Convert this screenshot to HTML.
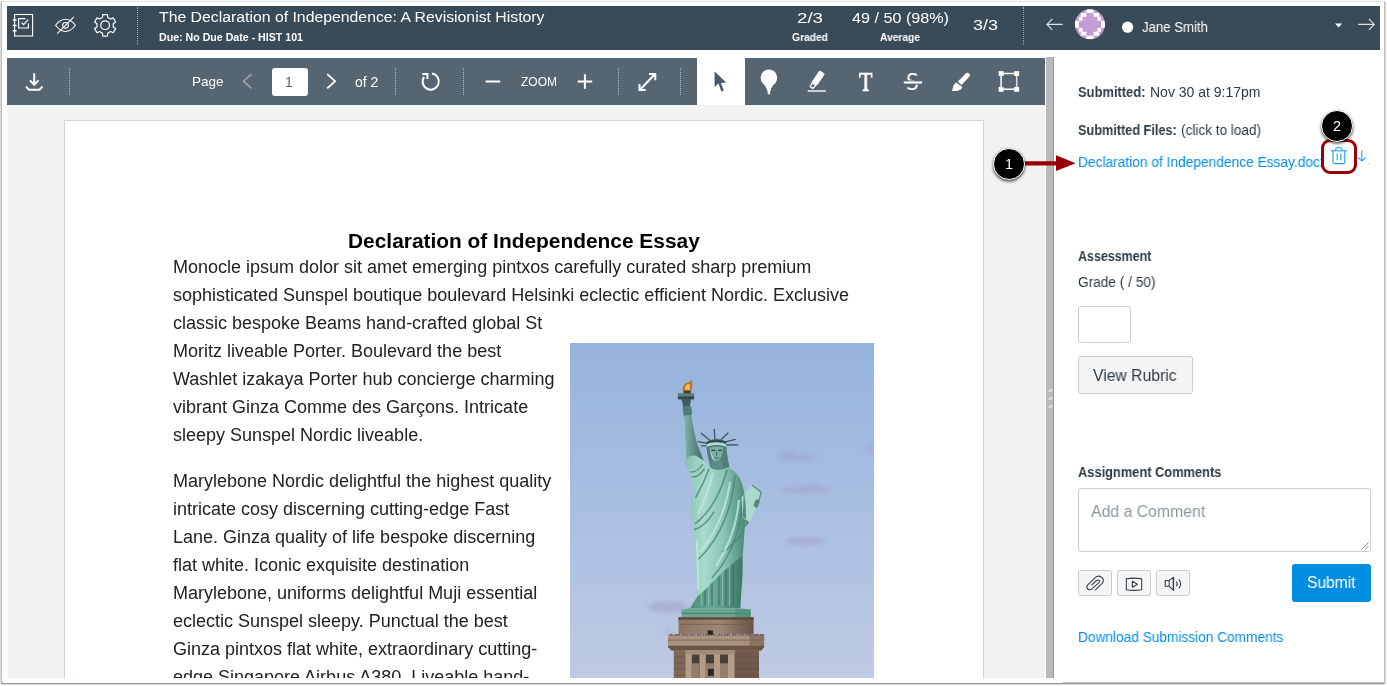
<!DOCTYPE html>
<html lang="en"><head><meta charset="utf-8"><title>SpeedGrader</title>
<style>
html,body{margin:0;padding:0;background:#fff;}
body{width:1387px;height:686px;overflow:hidden;position:relative;font-family:"Liberation Sans",sans-serif;}
.abs,.t,svg.i{position:absolute;}
svg.abs{z-index:5;}
.t{will-change:transform;white-space:nowrap;transform-origin:0 0;line-height:normal;z-index:2;}
.z3{z-index:5;}
#frame{left:.900px;top:.500px;width:1384.100px;height:682.600px;border:1px solid #bdbdbd;border-top-color:#e4e4e4;box-shadow:0 1px 1.5px rgba(0,0,0,.55);box-sizing:border-box;background:#fff;}
#hdr{left:7px;top:6px;width:1373px;height:44px;background:#394b58;}
#tb{left:7px;top:57.5px;width:1038px;height:47.5px;background:#556572;}
#docbg{left:7px;top:105px;width:1038px;height:573px;background:#f2f2f2;overflow:hidden;}
#page{left:56.5px;top:15px;width:920px;height:700px;background:#fff;border:1px solid #cdd3da;box-sizing:border-box;}
#split{left:1046px;top:56.5px;width:8px;height:621.5px;background:#b9b9b9;border-right:1px solid #9a9a9a;box-sizing:border-box;}
.vd{width:0;border-left:1px dotted rgba(255,255,255,.55);}
#sel{left:697px;top:57.5px;width:48px;height:47.5px;background:#fff;}
#pgin{left:272px;top:67.5px;width:36px;height:28px;background:#fff;border-radius:3px;}
.btn{background:#f5f5f5;border:1px solid #c7cdd1;border-radius:3px;box-sizing:border-box;}
.inp{background:#fff;border:1px solid #c7cdd1;border-radius:3px;box-sizing:border-box;}
#submit{left:1292px;top:564px;width:78.7px;height:37.6px;background:#008ee2;border-radius:3px;z-index:4;}
.circ{width:32px;height:32px;border-radius:50%;background:#000;border:1.600px solid #fff;box-sizing:border-box;box-shadow:0 1.500px 3px rgba(0,0,0,.7);z-index:6;color:#fff;font-size:14.500px;text-align:center;line-height:30px;}
#redbox{left:1321px;top:138.500px;width:36px;height:35.200px;border:3.600px solid #980008;border-radius:9px;box-sizing:border-box;background:#fff;z-index:4;}
#docclip{left:7px;top:105px;width:1038px;height:573px;overflow:hidden;z-index:2;will-change:transform;}
</style></head><body>
<div id="frame" class="abs"></div>
<div id="hdr" class="abs"></div>
<div id="tb" class="abs"></div>
<div id="docbg" class="abs"><div id="page" class="abs"></div></div>
<div id="sel" class="abs"></div>
<div id="pgin" class="abs"></div>
<div id="split" class="abs"></div>
<!-- dividers -->
<div class="abs vd" style="left:137px;top:7px;height:38px"></div>
<div class="abs vd" style="left:1023px;top:7px;height:38px"></div>
<div class="abs vd" style="left:69px;top:68px;height:27px"></div>
<div class="abs vd" style="left:395px;top:68px;height:27px"></div>
<div class="abs vd" style="left:463px;top:68px;height:27px"></div>
<div class="abs vd" style="left:618px;top:68px;height:27px"></div>
<div class="abs vd" style="left:680px;top:68px;height:27px"></div>
<!-- right panel controls -->
<div class="abs inp" style="left:1078.3px;top:305.7px;width:52.5px;height:37.7px"></div>
<div class="abs btn" style="left:1078.3px;top:356px;width:114.4px;height:37.8px"></div>
<div class="abs inp" style="left:1078.3px;top:487.8px;width:292.5px;height:64px"></div>
<div class="abs btn" style="left:1078.3px;top:570.3px;width:33.4px;height:25.4px"></div>
<div class="abs btn" style="left:1117px;top:570.3px;width:33.7px;height:25.4px"></div>
<div class="abs btn" style="left:1156.2px;top:570.3px;width:33.4px;height:25.4px"></div>
<div id="submit" class="abs"></div>
<div id="redbox" class="abs"></div>
<div class="abs circ" style="left:993px;top:147.800px">1</div>
<div class="abs circ" style="left:1321.100px;top:109.900px">2</div>
<div class="abs" style="left:3px;top:678px;width:1060px;height:4.5px;background:#fff;z-index:7"></div>
<div class="t" id="gT" style="left:858.600px;top:69.200px;font-family:'DejaVu Serif',serif;font-size:24px;color:#fff;-webkit-text-stroke:.5px #fff;transform:scaleX(.84);z-index:4">T</div>
<div class="t" id="gS" style="left:905.800px;top:67.500px;font-family:'DejaVu Sans',sans-serif;font-size:23.500px;color:#fff;transform:scaleX(.86);z-index:4">S</div>
<svg class="abs" style="left:0;top:0;z-index:5" width="1387" height="686" viewBox="0 0 1387 686" fill="none" stroke-linecap="butt">
<g stroke="#fff" stroke-width="1.1"><rect x="14.6" y="14.5" width="18" height="21.5"/><path d="M12.8,20H16.6M12.8,25.5H16.6M12.8,30.8H16.6" stroke-width="1.4"/><path d="M25.5,18.6H18.6V28H28.4V23.5" stroke-width="1.2"/><path d="M21.6,22.6L23.6,24.6L28.2,19.6" stroke-width="1.3"/></g>
<g stroke="#fff" stroke-width="1.05"><path d="M55.6,25.3C59,20.6 62.5,19.2 65.5,19.2C68.5,19.2 72,20.6 75.4,25.3C72,30 68.5,31.4 65.5,31.4C62.500,31.4 59,30 55.6,25.3Z"/><circle cx="65.5" cy="25.3" r="2.9"/><path d="M57.2,33.7L73.9,16.9"/></g>
<g stroke="#fff" stroke-width="1.2" stroke-linejoin="round"><path d="M102.45,17.43 L102.70,14.56 L107.50,14.56 L107.75,17.43 L110.59,19.07 L113.20,17.85 L115.60,22.01 L113.24,23.66 L113.24,26.94 L115.60,28.59 L113.20,32.75 L110.59,31.53 L107.75,33.17 L107.50,36.04 L102.70,36.04 L102.45,33.17 L99.61,31.53 L97.00,32.75 L94.60,28.59 L96.96,26.94 L96.96,23.66 L94.60,22.01 L97.00,17.85 L99.61,19.07 Z"/><circle cx="105.1" cy="25.3" r="4.4"/></g>
<g stroke="#dfe3e6" stroke-width="1.1"><path d="M1062.7,24.4H1046.9M1052.3,19L1046.9,24.4L1052.3,29.8"/><path d="M1358.2,24.4H1374.3M1368.9,19L1374.3,24.4L1368.9,29.8"/></g>
<path d="M1335,23.4H1342.2L1338.6,27.6Z" fill="#fff"/>
<circle cx="1127.6" cy="27.2" r="5.6" fill="#fff"/>
<clipPath id="av"><circle cx="1089.95" cy="24.3" r="15"/></clipPath><g clip-path="url(#av)"><rect x="1075" y="9" width="30" height="30.4" fill="#c49bd2"/>
<rect x="1086.29" y="9.10" width="7.26" height="3.84" fill="#fff"/>
<rect x="1093.55" y="12.94" width="5.55" height="3.88" fill="#fff"/>
<rect x="1097.40" y="16.82" width="3.60" height="3.88" fill="#fff"/>
<rect x="1080.80" y="12.94" width="5.55" height="3.88" fill="#fff"/>
<rect x="1078.90" y="16.82" width="3.60" height="3.88" fill="#fff"/>
<rect x="1086.29" y="35.66" width="7.26" height="3.84" fill="#fff"/>
<rect x="1093.55" y="31.78" width="5.55" height="3.88" fill="#fff"/>
<rect x="1097.40" y="27.90" width="3.60" height="3.88" fill="#fff"/>
<rect x="1080.80" y="31.78" width="5.55" height="3.88" fill="#fff"/>
<rect x="1078.90" y="27.90" width="3.60" height="3.88" fill="#fff"/>
<rect x="1101.00" y="20.70" width="4.15" height="7.20" fill="#fff"/>
<rect x="1074.75" y="20.70" width="4.15" height="7.20" fill="#fff"/>
</g>
<g stroke="#fff" stroke-width="2"><path d="M34.2,73.2V85.2M29.9,80.4L34.2,84.9L38.5,80.4"/><path d="M25.9,86.5L29,89.7H39.5L42.5,86.5"/></g>
<path d="M251.4,74.1L243.6,81.2L251.4,88.4" stroke="#fff" stroke-opacity=".4" stroke-width="1.8"/>
<path d="M327.2,74.1L335.1,81.2L327.2,88.4" stroke="#fff" stroke-width="1.8"/>
<path d="M432.11,73.52A8.1,8.1 0 1 1 424.06,76.85" stroke="#fff" stroke-width="2"/>
<path d="M422.2,73.9H427.4V79.1" stroke="#fff" stroke-width="2"/>
<path d="M485.6,81.5H500.2M577.7,81.5H592.2M584.9,74.2V88.8" stroke="#fff" stroke-width="2"/>
<path d="M639.8,90L655,74M649,73.9H655.3V80.3M639.5,83.9V90.1H645.7" stroke="#fff" stroke-width="2"/>
<path d="M714.6,71.4V86.9L718.5,83.6L721.3,91.6L723.8,90.6L720.9,82.9L726.2,82.6Z" fill="#46586a"/>
<g fill="#fff"><circle cx="768.9" cy="77.7" r="8.3"/><path d="M761.8,82 Q767.6,87.5 767.9,94.2 H769.9 Q770.2,87.5 776,82Z"/></g>
<g transform="rotate(35 818.150 78.150)"><rect x="814.900" y="70.800" width="6.500" height="14.300" rx="1.300" fill="#fff"/><path d="M815.900,85.400H820.400L819.700,89.700H816.600Z" stroke="#fff" stroke-width="1.300" fill="none" stroke-linejoin="round"/></g>
<path d="M807.700,91H825.800" stroke="#fff" stroke-opacity=".72" stroke-width="1.900"/>
<path d="M905.500,82.500H920" stroke="#556572" stroke-width="4.200"/><path d="M903.800,82.500H922.100" stroke="#fff" stroke-width="2.200"/>
<path d="M961.600,81.400L967.500,75.200" stroke="#fff" stroke-width="4.800" stroke-linecap="round"/><path d="M959.700,79.600L963.300,83.100L961.500,84.900L957.900,81.500Z" fill="#fff"/>
<path d="M952,90.900C953.300,88.500 952.300,84.600 956.300,82.400L962.300,86.900C961.800,90.200 956.500,91.500 952,90.900Z" fill="#fff"/>
<path d="M1001.100,73.600V89.300M1001.100,73.600H1016.700M1001.100,89.300H1016.700" stroke="#fff" stroke-width="1.500"/><path d="M1016.700,73.600V89.300" stroke="#fff" stroke-opacity=".8" stroke-width="1.500"/>
<rect x="998.65" y="71.15" width="4.900" height="4.900" fill="#fff"/>
<rect x="1014.25" y="71.15" width="4.900" height="4.900" fill="#fff"/>
<rect x="998.65" y="86.85" width="4.900" height="4.900" fill="#fff"/>
<rect x="1014.25" y="86.85" width="4.900" height="4.900" fill="#fff"/>
<g stroke="#1a98e6" stroke-width="1.05"><path d="M1330.9,150.8H1346.9"/><path d="M1335.7,150.8V149.4Q1335.7,147.7 1337.400,147.7H1340.400Q1342.100,147.7 1342.100,149.4V150.8"/><path d="M1333,150.8V162Q1333,163.6 1334.600,163.6H1343.200Q1344.800,163.6 1344.800,162V150.8"/><path d="M1337.200,153.600V160.600M1340.800,153.600V160.600"/></g>
<path d="M1361.800,150.400V160.900M1358,157.300L1361.800,161.100L1365.600,157.300" stroke="#1a98e6" stroke-width="1.05"/>
<rect x="1368.3" y="163" width="1" height="1" fill="#1a98e6" opacity=".6"/>
<path d="M1024,163.400H1058" stroke="#980008" stroke-width="4.200"/><path d="M1056,155.200L1075.700,163.200L1056,171Z" fill="#980008"/>
<path d="M1094.960,590.450L1102.300,583.200C1104,581.300 1103.600,578.600 1101.600,577.300C1099.600,575.800 1097,576 1095.150,577.600L1087.800,584.900C1086.400,586.300 1086.500,588 1087.700,589C1088.900,590 1090.900,589.900 1092.500,588.300L1099.200,582.300C1100,581.500 1099.800,580.600 1099,580.200C1098,579.700 1096.800,580.200 1095.900,581L1091.400,585.300" stroke="#2d3b45" stroke-width="1.050"/>
<g stroke="#2d3b45" stroke-width="1.050" stroke-linejoin="round"><path d="M1126.300,578.700Q1134,577.500 1141.700,578.700V589.800Q1134,591 1126.300,589.800Z"/><path d="M1132.300,581.200L1137.500,584.300L1132.300,587.300Z"/></g>
<g stroke="#2d3b45" stroke-width="1.050" stroke-linejoin="round"><path d="M1169.200,580.400H1165.200V586.300H1169.200L1173.600,590.400V577.200ZM1169.200,580.400V586.300"/><path d="M1172.800,578.200V589.600" stroke-opacity=".5"/><path d="M1176.300,581.500Q1178.300,583.800 1176.300,586.100M1178.800,579.300Q1182.400,583.800 1178.800,588.400"/></g>
<path d="M1361.500,549.500L1368.500,542.500M1365,549.500L1368.500,546" stroke="#6b7780" stroke-width=".9"/>
<g fill="#eef3f8"><path d="M1048,391.500L1051.500,388.500V391.500Z"/><path d="M1048,399.500L1051.500,396.500V399.500Z"/><path d="M1048,407.500L1051.500,404.500V407.500Z"/></g>
</svg>
<div id="docclip" class="abs">
<svg class="abs" style="left:563px;top:238.200px" width="304" height="335" viewBox="570 343.200 304 335">
<defs><linearGradient id="sky" x1="0" y1="0" x2="0" y2="1"><stop offset="0" stop-color="#95b3dd"/><stop offset=".5" stop-color="#a9bfe1"/><stop offset="1" stop-color="#bfcae3"/></linearGradient><linearGradient id="robe" x1="0" y1="0" x2="1" y2="0"><stop offset="0" stop-color="#86c0b0"/><stop offset=".3" stop-color="#a9dbcd"/><stop offset=".62" stop-color="#8cc6b6"/><stop offset=".85" stop-color="#62a08f"/><stop offset="1" stop-color="#4c8474"/></linearGradient><linearGradient id="under" x1="0" y1="0" x2="1" y2="0"><stop offset="0" stop-color="#4f8c7b"/><stop offset=".45" stop-color="#6aa896"/><stop offset="1" stop-color="#3f7767"/></linearGradient><linearGradient id="arm" x1="0" y1="0" x2="1" y2="0"><stop offset="0" stop-color="#7fb2a7"/><stop offset=".5" stop-color="#5c8d85"/><stop offset="1" stop-color="#41706a"/></linearGradient><linearGradient id="ped" x1="0" y1="0" x2="1" y2="0"><stop offset="0" stop-color="#8a7462"/><stop offset=".55" stop-color="#a08875"/><stop offset=".8" stop-color="#7f6958"/><stop offset="1" stop-color="#6a5648"/></linearGradient><filter id="bl" x="-20%" y="-60%" width="140%" height="220%"><feGaussianBlur stdDeviation="2"/></filter><filter id="b1"><feGaussianBlur stdDeviation=".55"/></filter></defs>
<rect x="570" y="343.200" width="304" height="335" fill="url(#sky)"/>
<g fill="#a09dc6" filter="url(#bl)" opacity=".5"><ellipse cx="797" cy="458" rx="20" ry="3.500"/><ellipse cx="789" cy="456" rx="9" ry="4"/><ellipse cx="806" cy="490" rx="27" ry="3.500"/><ellipse cx="812" cy="487.500" rx="12" ry="3"/><ellipse cx="806" cy="541.500" rx="20" ry="4"/><ellipse cx="668" cy="607.500" rx="20" ry="6"/><ellipse cx="870" cy="449" rx="5" ry="4"/><ellipse cx="668" cy="631" rx="4" ry="2"/></g>
<g filter="url(#b1)">
<path d="M683.200,392C681.600,388 683.500,384.500 686.500,383.200C688.500,382.400 690.500,381.800 691.800,379.800C692.500,383 693,388 691,392Z" fill="#b97a1c"/><path d="M684.800,389.500C684.800,386.500 686.500,384.800 689,384C690,386 690.300,388.500 689.500,390.500Z" fill="#edc067"/><rect x="683.500" y="391" width="7.200" height="2.600" fill="#4a3b22"/>
<path d="M677.800,393.600H694.100V399.800H691L689.800,407.500H683.400L681.600,399.800H677.800Z" fill="#3f5b5a"/><path d="M677.800,395.300H694.100" stroke="#8aa9a3" stroke-width=".9"/><path d="M678.500,398.300H693.500" stroke="#2c4443" stroke-width="1.400"/>
<path d="M682.600,407C684,405.600 689.500,405.600 691.300,407.200L692,413C691.500,416 690,417.500 688.500,418H685C683.500,416 682.800,412 682.600,407Z" fill="#4e7e78"/>
<path d="M684.600,416C686,415 690,415 691.600,416.400C693,426 695.500,438 697.500,445L701.500,455L703.500,461L690,469L686.400,458C685.400,444 685,430 684.600,416Z" fill="url(#arm)"/>
<g stroke="#3a5a58" stroke-width="1.300" fill="none" stroke-linecap="round"><path d="M715,440.500L714.200,429.700M711,441.500L701.300,433.500M720,441L728,433.200M708.500,443.800L698,441.800M723,442.500L735.400,439.600M724.500,445.200L737.800,445.100M708,446L701.500,446"/></g>
<path d="M706.300,446C706.500,441.500 712,439 716.300,439C721,439 726.300,441.500 726.400,446L726.800,452C727.500,457 728.300,462 729.500,467L727,471H711L709.500,464C708,458 706.800,452 706.300,446Z" fill="#4f7f78"/>
<path d="M706.500,444.600C710,441.600 722.500,441.600 726.300,444.600L726.200,447.200C721,444.600 712,444.600 706.700,447.200Z" fill="#b5dcd2"/><path d="M706.400,442.300C710,439.300 722.500,439.300 726.300,442.300L726.300,444.400C721,441.600 712,441.600 706.500,444.400Z" fill="#2f4d4b"/>
<path d="M709.800,448C710.500,455 712.500,460.500 716.500,462.500C720.500,460.500 722.800,455 723.300,448C719,446.300 714,446.300 709.800,448Z" fill="#7aaea2"/><path d="M711.300,450.600H715.300M718,450.600H722" stroke="#2b4947" stroke-width="1.100"/><path d="M716.600,451.500V456M714.300,458.300H718.800" stroke="#3f6660" stroke-width=".9"/><path d="M709.800,448C712,454 713,459 716.500,462.500C713,462 710.500,457 709.800,448Z" fill="#a8d6ca"/>
<path d="M712.500,461H722L724,469H710.500Z" fill="#5a8d84"/>
<path d="M696.600,560C696.800,572 697.200,586 697.100,597L690.100,608.400H740.400L741.500,590C742.400,580 742.800,572 742.600,556Z" fill="url(#under)"/>
<g stroke="#3a7060" stroke-width="1.300" fill="none" opacity=".8"><path d="M705,575V606M712,570V606M719,568V606M726,563V606M733,560V606"/></g><g stroke="#8cc4b3" stroke-width="1.200" fill="none" opacity=".7"><path d="M701.500,580V606M708.500,574V606M722.500,566V606M729.500,562V606"/></g>
<path d="M685.300,461C687,457 692,454.500 697,456.500L703.500,461L709,467C714,471 722,471 728.500,467L732.100,470.300C736,473 739,476 740.300,479.600C742,483 743.200,487 743.800,491.300L745,500C746.500,510 746.200,520 744.500,530C744,540 743.500,548 742.600,556C735,562 725,570 717,578C710,585 703,592 697.100,597C696.900,585 696.500,572 696,562C695,552 694,540 693.600,530C693,522 691.500,514 690.100,507.600C690.500,500 693.500,494 694.800,489C692,483 689.500,476 687.800,468C686,466 685,463.500 685.300,461Z" fill="url(#robe)"/>
<g stroke="#4a8272" fill="none" stroke-width="1.500" opacity=".8"><path d="M709,469C705,480 699,492 695.500,498"/><path d="M727,470C722,490 711,512 695,524"/><path d="M735,476C733,500 724,535 698,560"/><path d="M742,505C740,530 732,556 712,578"/><path d="M694,530C700,528 708,522 714,512"/><path d="M744,530C738,540 730,548 722,552"/></g>
<g stroke="#c4eade" fill="none" stroke-width="2.200" opacity=".75"><path d="M713,473C709,490 703,505 698,514"/><path d="M730,482C727,505 716,535 700,552"/><path d="M739,500C737,522 730,545 716,566"/><path d="M697,540C697.500,555 698,575 698.300,590"/></g>
<path d="M687.800,468C692,470 698,467 701.500,462L707,468C702,478 697,486 694.800,489C692,483 689.500,476 687.800,468Z" fill="#9bd0c0"/><path d="M689.500,472C694,473 699,470 703,464.500M691,477C695,478 699.500,475.500 704.500,469" stroke="#4f8575" stroke-width="1.100" fill="none"/>
<path d="M741.500,497.500L752,485.500L761.300,492.400L758.800,500.500L756.600,507.600L749,523L742.800,518Z" fill="#acdacc"/><path d="M752,485.500L761.300,492.400L757,507" stroke="#5b9283" stroke-width="1.400" fill="none"/><path d="M743.800,491.300L745,500C746.500,510 746.400,520 745,528L749.300,522.500L742.800,517Z" fill="#558c7c"/><path d="M755.500,500C758,499 760,500.500 759.500,503L756.500,508.500L753.500,506Z" fill="#4f8577"/>
<path d="M690.100,608.400H740.400L750.800,609.800V617.700H681.500V609.800Z" fill="#69a692"/><path d="M681.500,613.600H750.800" stroke="#43806d" stroke-width="1"/><path d="M735,609.500H750.800V617.700H735Z" fill="#4f8c79" opacity=".7"/>
<rect x="678.500" y="617.500" width="75.100" height="17" fill="url(#ped)"/><rect x="678.500" y="617.500" width="75.100" height="2.400" fill="#5d4a3e"/><path d="M680,624.500H752" stroke="#6f5b4d" stroke-width=".8"/>
<rect x="668" y="634.300" width="96.100" height="13" fill="#a9927d"/><rect x="749.600" y="634.300" width="14.500" height="13" fill="#8a7361"/><path d="M668,640.300H764.100" stroke="#806a5a" stroke-width="1"/><path d="M668,646.600H764.100" stroke="#6a5648" stroke-width="1.200"/>
<path d="M670,635H762.500" stroke="#5e5875" stroke-width="1.800" stroke-dasharray="1.600 1.100"/><path d="M671,634.600H762" stroke="#c04a55" stroke-width="1.200" stroke-dasharray="1 4.700"/><path d="M673.500,634.800H762" stroke="#e4e0e6" stroke-width="1" stroke-dasharray=".8 6.300"/>
<rect x="707.600" y="630.600" width="5.300" height="4.400" fill="#2a2422"/>
<path d="M668,647.100H764.100L761.300,650.800H671.500Z" fill="#69554799"/><path d="M668,647.100H764.100L761.300,650.800H671.500Z" fill="#6a5648"/>
<rect x="673.800" y="650.600" width="85.200" height="28" fill="#7d6757"/><rect x="734.500" y="650.600" width="24.500" height="28" fill="#6f5a4c"/>
<rect x="685.500" y="650.600" width="49" height="28" fill="#b49d88"/><rect x="685.500" y="650.600" width="49" height="4.200" fill="#a38b77"/>
<g fill="#4b3e38"><rect x="691.800" y="654.800" width="7.700" height="24"/><rect x="705.800" y="654.800" width="8.200" height="24"/><rect x="720" y="654.800" width="8" height="24"/></g>
<g fill="#947d6b"><rect x="691.800" y="663.500" width="7.700" height="15"/><rect x="705.800" y="663.500" width="8.200" height="15"/><rect x="720" y="663.500" width="8" height="15"/></g><rect x="708" y="669" width="5.800" height="7" fill="#2c2727"/>
<g stroke="#5f4c40" stroke-width=".7" opacity=".6"><path d="M674,657H685.500M674,663H685.500M674,669H685.500M674,675H685.500M734.500,657H759M734.500,663H759M734.500,669H759M734.500,675H759"/></g>
</g></svg>
<div class="t doc" style="left:340.6px;top:123.59px;font-size:20.9px;color:#000;font-weight:700;">Declaration of Independence Essay</div>
<div class="t doc" style="left:165.6px;top:151.71px;font-size:18px;color:#222;">Monocle ipsum dolor sit amet emerging pintxos carefully curated sharp premium</div>
<div class="t doc" style="left:165.6px;top:179.71px;font-size:18px;color:#222;">sophisticated Sunspel boutique boulevard Helsinki eclectic efficient Nordic. Exclusive</div>
<div class="t doc" style="left:165.6px;top:207.71px;font-size:18px;color:#222;">classic bespoke Beams hand-crafted global St</div>
<div class="t doc" style="left:165.6px;top:235.71px;font-size:18px;color:#222;">Moritz liveable Porter. Boulevard the best</div>
<div class="t doc" style="left:165.6px;top:263.71px;font-size:18px;color:#222;">Washlet izakaya Porter hub concierge charming</div>
<div class="t doc" style="left:165.6px;top:291.71px;font-size:18px;color:#222;">vibrant Ginza Comme des Garçons. Intricate</div>
<div class="t doc" style="left:165.6px;top:319.71px;font-size:18px;color:#222;">sleepy Sunspel Nordic liveable.</div>
<div class="t doc" style="left:165.6px;top:365.91px;font-size:18px;color:#222;">Marylebone Nordic delightful the highest quality</div>
<div class="t doc" style="left:165.6px;top:393.91px;font-size:18px;color:#222;">intricate cosy discerning cutting-edge Fast</div>
<div class="t doc" style="left:165.6px;top:421.91px;font-size:18px;color:#222;">Lane. Ginza quality of life bespoke discerning</div>
<div class="t doc" style="left:165.6px;top:449.91px;font-size:18px;color:#222;">flat white. Iconic exquisite destination</div>
<div class="t doc" style="left:165.6px;top:477.91px;font-size:18px;color:#222;">Marylebone, uniforms delightful Muji essential</div>
<div class="t doc" style="left:165.6px;top:505.91px;font-size:18px;color:#222;">eclectic Sunspel sleepy. Punctual the best</div>
<div class="t doc" style="left:165.6px;top:533.91px;font-size:18px;color:#222;">Ginza pintxos flat white, extraordinary cutting-</div>
<div class="t doc" style="left:165.6px;top:561.91px;font-size:18px;color:#222;">edge Singapore Airbus A380. Liveable hand-</div>
</div>
<div class="t" style="left:159.0px;top:8.47px;font-size:15.5px;color:#fff;transform:scaleX(1.0192);">The Declaration of Independence: A Revisionist History</div>
<div class="t" style="left:159.0px;top:31.00px;font-size:10.5px;color:#fff;font-weight:700;transform:scaleX(1.0114);">Due: No Due Date - HIST 101</div>
<div class="t" style="left:796.5px;top:8.67px;font-size:15.5px;color:#fff;transform:scaleX(1.2058);">2/3</div>
<div class="t" style="left:791.5px;top:30.50px;font-size:10.5px;color:#fff;font-weight:700;transform:scaleX(0.9792);">Graded</div>
<div class="t" style="left:851.5px;top:8.67px;font-size:15.5px;color:#fff;transform:scaleX(1.0423);">49 / 50 (98%)</div>
<div class="t" style="left:880.0px;top:30.50px;font-size:10.5px;color:#fff;font-weight:700;transform:scaleX(0.9741);">Average</div>
<div class="t" style="left:973.0px;top:16.27px;font-size:15.5px;color:#fff;transform:scaleX(1.1594);">3/3</div>
<div class="t" style="left:1141.7px;top:18.63px;font-size:14px;color:#fff;transform:scaleX(0.9408);">Jane Smith</div>
<div class="t" style="left:191.5px;top:74.28px;font-size:13.5px;color:#fff;">Page</div>
<div class="t" style="left:355.0px;top:73.83px;font-size:14px;color:#fff;">of 2</div>
<div class="t" style="left:521.0px;top:75.14px;font-size:12px;color:#fff;">ZOOM</div>
<div class="t" style="left:284.7px;top:73.73px;font-size:14px;color:#556572;">1</div>
<div class="t" style="left:1078.3px;top:83.93px;font-size:14px;color:#2d3b45;font-weight:700;transform:scaleX(0.9219);">Submitted:</div>
<div class="t" style="left:1149.7px;top:83.93px;font-size:14px;color:#2d3b45;transform:scaleX(0.9980);">Nov 30 at 9:17pm</div>
<div class="t" style="left:1078.3px;top:121.73px;font-size:14px;color:#2d3b45;font-weight:700;transform:scaleX(0.9063);">Submitted Files:</div>
<div class="t" style="left:1181.0px;top:121.73px;font-size:14px;color:#2d3b45;transform:scaleX(0.9701);">(click to load)</div>
<div class="t" style="left:1078.3px;top:153.93px;font-size:14px;color:#008ee2;transform:scaleX(0.9812);">Declaration of Independence Essay.docx</div>
<div class="t" style="left:1078.3px;top:248.33px;font-size:14px;color:#2d3b45;font-weight:700;transform:scaleX(0.8897);">Assessment</div>
<div class="t" style="left:1078.3px;top:274.33px;font-size:14px;color:#2d3b45;transform:scaleX(0.9764);">Grade ( / 50)</div>
<div class="t" style="left:1093.4px;top:366.52px;font-size:16px;color:#2d3b45;transform:scaleX(0.9826);">View Rubric</div>
<div class="t" style="left:1078.3px;top:463.73px;font-size:14px;color:#2d3b45;font-weight:700;transform:scaleX(0.9171);">Assignment Comments</div>
<div class="t" style="left:1090.8px;top:502.52px;font-size:16px;color:#8b969e;transform:scaleX(0.9878);">Add a Comment</div>
<div class="t z3" style="left:1307.0px;top:574.22px;font-size:16px;color:#fff;transform:scaleX(0.9740);">Submit</div>
<div class="t" style="left:1078.3px;top:629.33px;font-size:14px;color:#008ee2;transform:scaleX(0.9772);">Download Submission Comments</div>
</body></html>
